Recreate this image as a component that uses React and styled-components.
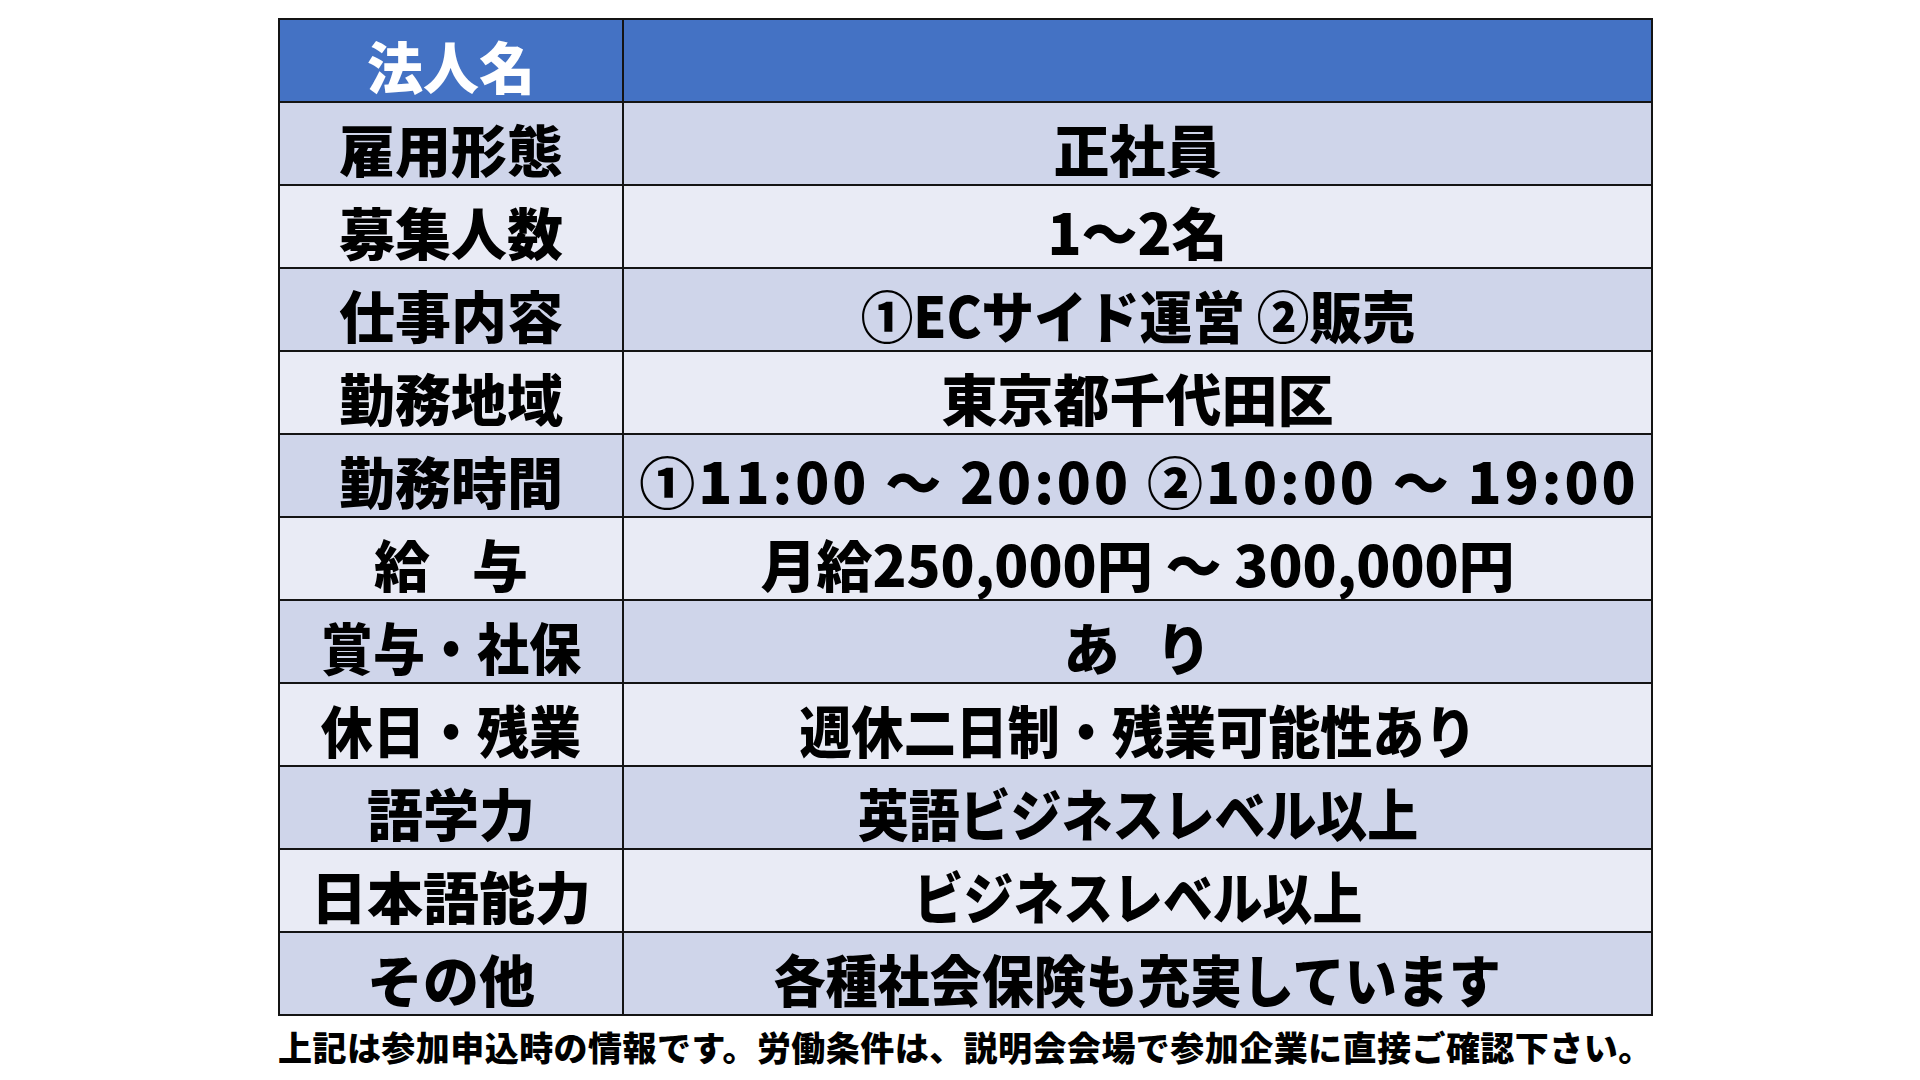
import React from 'react';
import styled, { createGlobalStyle } from 'styled-components';

const Global = createGlobalStyle`
  html, body { margin: 0; padding: 0; background: #ffffff; }
  body { font-family: "Noto Sans CJK JP", "Noto Sans", sans-serif; }
`;

const Page = styled.main`
  width: 1920px;
  height: 1080px;
  box-sizing: border-box;
  padding: 18px 0 0 278px;
`;

const Table = styled.table`
  border-collapse: collapse;
  table-layout: fixed;
  width: 1375px;
`;

const Row = styled.tr`
  height: 83px;
`;

const tones = {
  head: '#4472c4',
  dark: '#cfd5ea',
  light: '#e9ebf5',
};

const Cell = styled.td`
  box-sizing: border-box;
  width: ${(p) => (p.$label ? '344px' : 'auto')};
  border: 2px solid #141414;
  background: ${(p) => tones[p.$tone]};
  color: ${(p) => (p.$tone === 'head' ? '#ffffff' : '#000000')};
  text-align: center;
  vertical-align: middle;
  padding: 8px 0 0;
  font-family: "Noto Sans CJK JP", "Noto Sans", sans-serif;
  font-weight: 900;
  font-size: 56px;
  line-height: 1.25;
  white-space: nowrap;
`;

const Squeeze = styled.span`
  display: inline-block;
  transform: scaleX(${(p) => p.$x});
  transform-origin: center;
  letter-spacing: ${(p) => p.$ls}px;
  margin-right: ${(p) => -p.$ls}px;
`;

const Note = styled.p`
  margin: 11px 0 0;
  font-family: "Noto Sans CJK JP", "Noto Sans", sans-serif;
  font-weight: 900;
  font-size: 34px;
  line-height: 1.2;
  letter-spacing: 0.45px;
  color: #000000;
  white-space: nowrap;
`;

const rows = [
  { label: '雇用形態', value: '正社員' },
  { label: '募集人数', value: '1～2名' },
  { label: '仕事内容', value: '①ECサイド運営 ②販売', x: 0.94 },
  { label: '勤務地域', value: '東京都千代田区' },
  { label: '勤務時間', value: '①11:00 ～ 20:00 ②10:00 ～ 19:00', ls: 3 },
  { label: '給　与', value: '月給250,000円 ～ 300,000円', lls: -7 },
  { label: '賞与・社保', value: 'あ　り', lx: 0.93, ls: -10 },
  { label: '休日・残業', value: '週休二日制・残業可能性あり', x: 0.93, lx: 0.93 },
  { label: '語学力', value: '英語ビジネスレベル以上', x: 0.91 },
  { label: '日本語能力', value: 'ビジネスレベル以上', x: 0.89 },
  { label: 'その他', value: '各種社会保険も充実しています', x: 0.93 },
];

export default function App() {
  return (
    <Page>
      <Global />
      <Table>
        <tbody>
          <Row>
            <Cell $label $tone="head">法人名</Cell>
            <Cell $tone="head" />
          </Row>
          {rows.map((r, i) => {
            const tone = i % 2 === 0 ? 'dark' : 'light';
            return (
              <Row key={r.label}>
                <Cell $label $tone={tone}>
                  <Squeeze $x={r.lx ?? 1} $ls={r.lls ?? 0}>{r.label}</Squeeze>
                </Cell>
                <Cell $tone={tone}>
                  <Squeeze $x={r.x ?? 1} $ls={r.ls ?? 0}>{r.value}</Squeeze>
                </Cell>
              </Row>
            );
          })}
        </tbody>
      </Table>
      <Note>上記は参加申込時の情報です。労働条件は、説明会会場で参加企業に直接ご確認下さい。</Note>
    </Page>
  );
}
